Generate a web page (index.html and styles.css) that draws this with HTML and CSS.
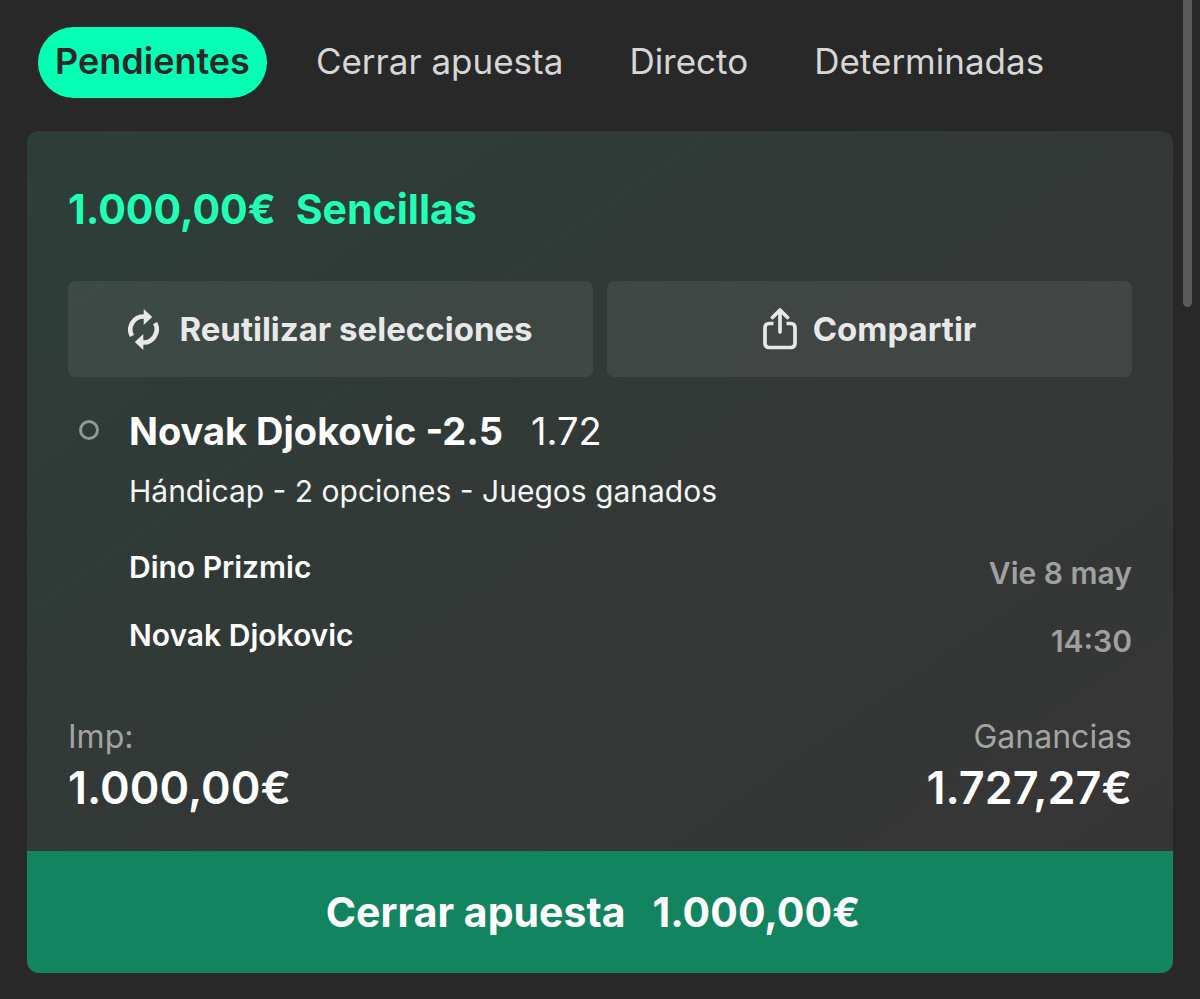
FILE: index.html
```html
<!DOCTYPE html>
<html lang="es">
<head>
<meta charset="utf-8">
<meta name="viewport" content="width=device-width, initial-scale=1">
<title>Mis apuestas</title>
<link rel="stylesheet" href="styles.css">
</head>
<body>
<nav class="tabs">
  <button class="tab tab-active" type="button">Pendientes</button>
  <button class="tab" type="button">Cerrar apuesta</button>
  <button class="tab" type="button">Directo</button>
  <button class="tab" type="button">Determinadas</button>
</nav>
<main class="card">
  <div class="card-body">
    <h1 class="title"><span>1.000,00€</span><span>Sencillas</span></h1>
    <div class="actions">
      <button class="action action-reuse" type="button">
        <svg class="icon-reuse" viewBox="0 0 31 41" aria-hidden="true">
          <g fill="none" stroke="currentColor" stroke-width="4.600">
            <path d="M3.900 27A13.200 13.200 0 0 1 16.500 7.600"/>
            <path d="M27.100 14A13.200 13.200 0 0 1 14.500 33.400"/>
          </g>
          <path fill="currentColor" d="M15.700 0L24.200 8 15.700 16zM15.300 41L6.800 33l8.500-8z"/>
        </svg>
        <span>Reutilizar selecciones</span>
      </button>
      <button class="action" type="button">
        <svg class="icon-share" viewBox="0 0 34 42" aria-hidden="true">
          <path fill="none" stroke="currentColor" stroke-width="3.700" stroke-linejoin="round" d="M10.500 15.500H6a4 4 0 0 0-4 4v16a4 4 0 0 0 4 4h22a4 4 0 0 0 4-4v-16a4 4 0 0 0-4-4h-4.500"/>
          <path fill="none" stroke="currentColor" stroke-width="3.700" stroke-linecap="round" stroke-linejoin="round" d="M17 24V3M9.500 9.500L17 2l7.500 7.500"/>
        </svg>
        <span>Compartir</span>
      </button>
    </div>
    <section class="selection">
      <span class="dot"></span>
      <div class="details">
        <h2 class="pick"><span>Novak Djokovic -2.5</span><span class="odds">1.72</span></h2>
        <p class="market">Hándicap - 2 opciones - Juegos ganados</p>
        <div class="match">
          <div class="players"><span>Dino Prizmic</span><span>Novak Djokovic</span></div>
          <div class="date"><span>Vie 8 may</span><span>14:30</span></div>
        </div>
      </div>
    </section>
    <div class="totals">
      <div><div class="label">Imp:</div><div class="amount">1.000,00€</div></div>
      <div class="right"><div class="label">Ganancias</div><div class="amount">1.727,27€</div></div>
    </div>
  </div>
  <button class="cashout" type="button"><span>Cerrar apuesta</span><span>1.000,00€</span></button>
</main>
<div class="scrollbar"></div>
</body>
</html>
```
FILE: styles.css
```css
* { box-sizing: border-box; }
body {
  margin: 0;
  padding: 27px 27px 26px;
  background: #282828;
  color: #fff;
  font-family: Inter, "Liberation Sans", sans-serif;
}
button { border: 0; margin: 0; font-family: inherit; color: inherit; cursor: pointer; }
h1, h2, p { margin: 0; }
.tabs { display: flex; align-items: center; gap: 32px; padding-left: 11px; margin-bottom: 33px; }
.tab {
  height: 71px;
  padding: 0 17px 4px;
  border-radius: 36px;
  background: none;
  color: #d6d6d6;
  font-size: 35px;
  line-height: 40px;
  white-space: nowrap;
}
.tab-active { background: #05ffb4; color: #282828; font-size: 36px; font-weight: 600; }
.card {
  border-radius: 12px;
  overflow: hidden;
  background: linear-gradient(145deg, #2d3e38 0%, #333836 50%, #363535 100%);
}
.card-body { padding: 54px 41px 35px; }
.title { display: flex; gap: 20px; color: #1fffb5; font-size: 41px; line-height: 48px; font-weight: 700; }
.actions { display: grid; grid-template-columns: 1fr 1fr; gap: 14px; margin-top: 48px; }
.action {
  display: flex; align-items: center; justify-content: center; gap: 16px;
  height: 96px;
  padding: 0;
  border-radius: 7px;
  background: rgba(255, 255, 255, 0.07);
  color: #e8e8e8;
  font-size: 33px;
  font-weight: 700;
}
.action-reuse { gap: 20px; }
.icon-reuse { width: 31px; height: 41px; }
.icon-share { width: 34px; height: 42px; }
.selection { display: flex; margin-top: 30px; padding-left: 11px; }
.dot { flex: none; width: 20px; height: 20px; margin: 13px 30px 0 0; border: 3px solid #939795; border-radius: 50%; }
.details { flex: 1; }
.pick { display: flex; gap: 28px; font-size: 38px; line-height: 48px; font-weight: 700; }
.odds { font-weight: 400; }
.market { margin-top: 18px; font-size: 30px; line-height: 36px; color: #f5f5f5; }
.match { display: flex; justify-content: space-between; margin-top: 40px; font-size: 30px; line-height: 36px; font-weight: 600; }
.players, .date { display: flex; flex-direction: column; gap: 32px; }
.date { margin-top: 6px; text-align: right; color: #a0a0a0; }
.totals { display: flex; justify-content: space-between; margin-top: 58px; }
.right { text-align: right; }
.label { color: #a3a4a3; font-size: 32px; line-height: 40px; }
.amount { margin-top: 3px; font-size: 45px; line-height: 56px; font-weight: 600; }
.cashout {
  display: flex; align-items: center; justify-content: center; gap: 27px;
  width: 100%;
  height: 122px;
  padding: 0 14px 0 0;
  background: #128460;
  color: #fff;
  font-size: 41px;
  font-weight: 700;
}
.scrollbar { position: absolute; top: 0; right: 8px; width: 9px; height: 307px; border-radius: 0 0 5px 5px; background: #5a5a5a; }
```
